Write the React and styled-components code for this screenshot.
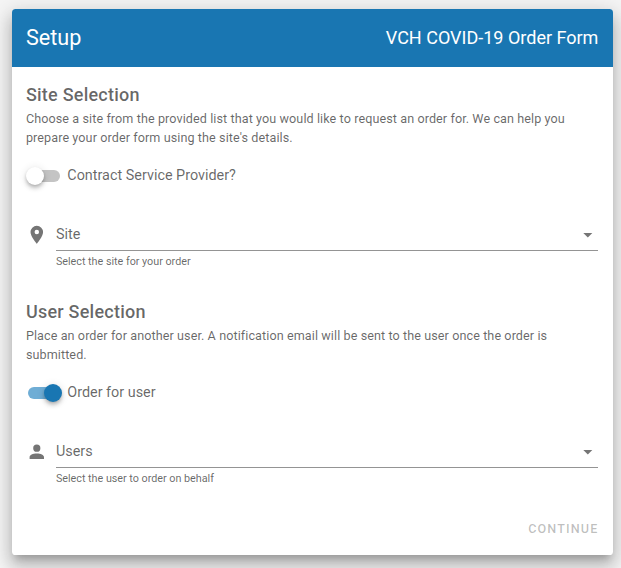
import React, { useState } from "react";
import styled, { createGlobalStyle } from "styled-components";

const GlobalStyle = createGlobalStyle`
  *, *::before, *::after { box-sizing: border-box; }
  html, body { margin: 0; }
  body {
    background: #f5f5f5;
    color: rgba(0, 0, 0, 0.6);
    font-family: Roboto, "Liberation Sans", sans-serif;
    overflow: hidden;
  }
  h1, h2, h3, p { margin: 0; }
`;

const Page = styled.main`
  height: 568px;
  padding: 9.4px 8px 13px 12px;
`;

const Card = styled.section`
  display: flex;
  flex-direction: column;
  width: 601px;
  height: 545.6px;
  overflow: hidden;
  border-radius: 3.6px;
  background: #fff;
  box-shadow:
    0 6.3px 7.2px -3.6px rgba(0, 0, 0, 0.2),
    0 10.8px 15.3px 1.8px rgba(0, 0, 0, 0.14),
    0 4.5px 19.8px 3.6px rgba(0, 0, 0, 0.12);
`;

const Toolbar = styled.header`
  display: flex;
  flex: none;
  align-items: center;
  justify-content: space-between;
  height: 57.6px;
  padding: 0 14.6px 0 13.9px;
  background: #1976b2;
  color: #fff;
`;

const Title = styled.h1`
  font-size: 21.6px;
  font-weight: 400;
  line-height: 28.8px;
`;

const FormName = styled.h2`
  padding-bottom: 1.4px;
  font-size: 18px;
  font-weight: 400;
  line-height: 27px;
`;

const Body = styled.div`
  display: flex;
  flex: 1;
  flex-direction: column;
  gap: 28px;
  padding: 14px 15px 0 13.9px;
`;

const Section = styled.section`
  height: 189px;
`;

const Heading = styled.h3`
  font-size: 18px;
  font-weight: 500;
  line-height: 28.8px;
  letter-spacing: 0.235px;
`;

const Description = styled.p`
  margin-top: -0.8px;
  font-size: 12.6px;
  line-height: 19px;
  letter-spacing: 0.088px;
`;

const SwitchRow = styled.label`
  display: flex;
  align-items: center;
  height: 22px;
  margin-top: 17.8px;
  font-size: 14.4px;
  cursor: pointer;
`;

const HiddenCheckbox = styled.input`
  position: absolute;
  opacity: 0;
  pointer-events: none;
`;

const Track = styled.span`
  position: relative;
  width: 32.4px;
  height: 12.6px;
  margin: 0.2px 7.2px 0 1.8px;
  border-radius: 7.2px;
  background: ${({ $on }) => ($on ? "#6fadd5" : "#c4c4c4")};
`;

const Thumb = styled.span`
  position: absolute;
  top: -2.7px;
  left: ${({ $on }) => ($on ? "16.2px" : "-1.8px")};
  width: 18px;
  height: 18px;
  border-radius: 50%;
  background: ${({ $on }) => ($on ? "#1976b2" : "#fff")};
  box-shadow:
    0 1.8px 3.6px -0.9px rgba(0, 0, 0, 0.2),
    0 3.6px 4.5px 0 rgba(0, 0, 0, 0.14),
    0 0.9px 9px 0 rgba(0, 0, 0, 0.12);
`;

const Field = styled.div`
  display: flex;
  gap: 8.4px;
  margin-top: 37px;
`;

const Icon = styled.svg`
  flex: none;
  width: 21.6px;
  height: 21.6px;
  margin-top: 0.2px;
  fill: #757575;
`;

const Control = styled.div`
  flex: 1;
`;

const Select = styled.div`
  display: flex;
  align-items: center;
  justify-content: space-between;
  height: 27px;
  padding-bottom: 3px;
  border-bottom: 1px solid #949494;
  font-size: 14.4px;
  line-height: 18px;
`;

const Arrow = styled.svg`
  width: 21.6px;
  height: 21.6px;
  margin: 0 -0.4px 0 0;
  fill: #757575;
`;

const Hint = styled.p`
  margin-top: 4px;
  font-size: 10.8px;
  line-height: 13px;
  letter-spacing: -0.02px;
`;

const Actions = styled.footer`
  display: flex;
  flex: none;
  justify-content: flex-end;
  align-items: center;
  height: 51px;
  padding: 0 14.6px;
`;

const ContinueButton = styled.button`
  padding: 0;
  border: 0;
  background: none;
  color: rgba(0, 0, 0, 0.26);
  font: 500 12.6px/18px Roboto, sans-serif;
  letter-spacing: 1.125px;
  text-transform: uppercase;
`;

const PIN =
  "M12 11.5A2.5 2.5 0 0 1 9.5 9 2.5 2.5 0 0 1 12 6.5 2.5 2.5 0 0 1 14.5 9 2.5 2.5 0 0 1 12 11.5M12 2a7 7 0 0 0-7 7c0 5.25 7 13 7 13s7-7.75 7-13a7 7 0 0 0-7-7z";
const PERSON =
  "M12 4a4 4 0 0 1 4 4 4 4 0 0 1-4 4 4 4 0 0 1-4-4 4 4 0 0 1 4-4m0 10c4.42 0 8 1.79 8 4v2H4v-2c0-2.21 3.58-4 8-4z";

function Switch({ label, initial }) {
  const [on, setOn] = useState(initial);
  return (
    <SwitchRow>
      <HiddenCheckbox type="checkbox" checked={on} onChange={() => setOn(!on)} />
      <Track $on={on}>
        <Thumb $on={on} />
      </Track>
      {label}
    </SwitchRow>
  );
}

function SelectField({ icon, label, hint }) {
  return (
    <Field>
      <Icon viewBox="0 0 24 24">
        <path d={icon} />
      </Icon>
      <Control>
        <Select>
          {label}
          <Arrow viewBox="0 0 24 24">
            <path d="M7 10l5 5 5-5z" />
          </Arrow>
        </Select>
        <Hint>{hint}</Hint>
      </Control>
    </Field>
  );
}

export default function App() {
  return (
    <>
      <GlobalStyle />
      <Page>
        <Card>
          <Toolbar>
            <Title>Setup</Title>
            <FormName>VCH COVID-19 Order Form</FormName>
          </Toolbar>
          <Body>
            <Section>
              <Heading>Site Selection</Heading>
              <Description>
                Choose a site from the provided list that you would like to request an order for. We
                can help you prepare your order form using the site's details.
              </Description>
              <Switch label="Contract Service Provider?" initial={false} />
              <SelectField icon={PIN} label="Site" hint="Select the site for your order" />
            </Section>
            <Section>
              <Heading>User Selection</Heading>
              <Description>
                Place an order for another user. A notification email will be sent to the user once
                the order is submitted.
              </Description>
              <Switch label="Order for user" initial={true} />
              <SelectField icon={PERSON} label="Users" hint="Select the user to order on behalf" />
            </Section>
          </Body>
          <Actions>
            <ContinueButton disabled>Continue</ContinueButton>
          </Actions>
        </Card>
      </Page>
    </>
  );
}
